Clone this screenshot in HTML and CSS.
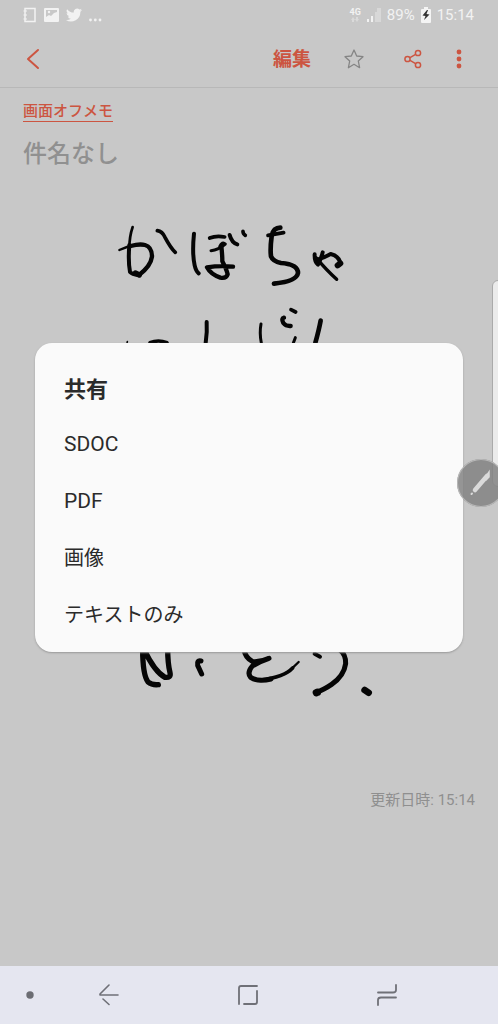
FILE: index.html
```html
<!DOCTYPE html>
<html lang="ja">
<head>
<meta charset="utf-8">
<meta name="viewport" content="width=device-width, initial-scale=1">
<title>画面オフメモ</title>
<link rel="stylesheet" href="styles.css">
</head>
<body>
<div class="screen">
  <div class="status">
    <div class="status-group">
      <svg width="14" height="16" viewBox="0 0 14 16" fill="none" stroke="#f2f2f2"><path d="M2 1.5H12V14.5H2Z" stroke-width="1.5"/><path d="M.5 4H4M.5 8H4M.5 12H4" stroke-width="1.2"/></svg>
      <svg width="15" height="16" viewBox="0 0 15 16"><path d="M1 1H14Q15 1 15 2V14Q15 15 14 15H1Q0 15 0 14V2Q0 1 1 1ZM2 3V10L5 8L7 9L10 6L13 5V3Z" fill="#f2f2f2" fill-rule="evenodd"/><circle cx="5" cy="5" r="1.2" fill="#f2f2f2"/></svg>
      <svg width="16" height="16" viewBox="0 0 24 24"><path d="M24 4.6a10 10 0 0 1-2.8.8 5 5 0 0 0 2.1-2.7 10 10 0 0 1-3.1 1.2 4.9 4.9 0 0 0-8.4 4.5A14 14 0 0 1 1.7 3.2a4.9 4.9 0 0 0 1.5 6.5 5 5 0 0 1-2.2-.6 4.9 4.9 0 0 0 3.9 4.9 5 5 0 0 1-2.2.1 4.9 4.9 0 0 0 4.6 3.4A10 10 0 0 1 0 19.5 14 14 0 0 0 21.5 7.1 10 10 0 0 0 24 4.6Z" fill="#f2f2f2"/></svg>
      <svg width="14" height="16" viewBox="0 0 14 16" fill="#f2f2f2"><circle cx="1.5" cy="13" r="1.4"/><circle cx="6.3" cy="13" r="1.4"/><circle cx="11" cy="13" r="1.4"/></svg>
    </div>
    <div class="status-group status-right">
      <div class="network"><span>4G</span><svg width="8" height="6" viewBox="0 0 8 6" fill="#dadada"><path d="M0 3L2 0L4 3H3V5H1V3ZM4 2H5V0H7V2H8L6 5Z"/></svg></div>
      <svg width="14" height="14" viewBox="0 0 14 14"><path d="M0 11H2V14H0ZM4 8H6V14H4Z" fill="#f2f2f2"/><path d="M8 4H10V14H8ZM10 0H14V14H10Z" fill="#d8d8d8"/></svg>
      <span>89%</span>
      <svg width="10" height="16" viewBox="0 0 10 16"><path d="M3 0H7V2H9Q10 2 10 3V15Q10 16 9 16H1Q0 16 0 15V3Q0 2 1 2H3Z" fill="#f4f4f4"/><path d="M6 3L1.5 8.5L4.5 9L3 13L8.5 7.5L5.5 7L7 3Z" fill="#333"/></svg>
      <span>15:14</span>
    </div>
  </div>
  <header class="toolbar">
    <button class="icon-button" aria-label="戻る"><svg width="14" height="22" viewBox="0 0 14 22" fill="none" stroke="#cc5541" stroke-width="2" stroke-linecap="round" stroke-linejoin="round"><path d="M12 2L2 11L12 20"/></svg></button>
    <button class="edit">編集</button>
    <button class="icon-button star" aria-label="お気に入り"><svg width="20" height="20" viewBox="0 0 20 20" fill="none" stroke="#858585" stroke-width="1.3" stroke-linejoin="round"><path d="M10 1L12.7 7L19 7.7L14.3 12L15.6 18.7L10 15.3L4.4 18.7L5.7 12L1 7.7L7.3 7Z"/></svg></button>
    <button class="icon-button share" aria-label="共有"><svg width="18" height="20" viewBox="0 0 18 20" fill="none" stroke="#cc5541" stroke-width="1.5"><circle cx="3.5" cy="10" r="2.6"/><circle cx="14" cy="4" r="2.6"/><circle cx="14" cy="16" r="2.6"/><path d="M6 8.6L11.6 5.4M6 11.4L11.6 14.6"/></svg></button>
    <button class="icon-button more" aria-label="その他"><svg width="6" height="20" viewBox="0 0 6 20" fill="#cc5541"><circle cx="3" cy="3" r="2.4"/><circle cx="3" cy="10" r="2.4"/><circle cx="3" cy="17" r="2.4"/></svg></button>
  </header>
  <main class="note">
    <a class="category" href="#">画面オフメモ</a>
    <h1 class="title">件名なし</h1>
    <svg class="ink" viewBox="0 215 498 500" role="img" aria-label="手書きメモ">
      <g transform="translate(110 215) scale(.3333)">
        <path d="M68 36Q58 65 58 100" stroke-width="8"/>
        <path d="M58 90Q54 140 60 171Q66 178 86 180" stroke-width="12"/>
        <path d="M28 105Q50 94 76 90" stroke-width="7"/>
        <path d="M62 93Q88 86 105 90Q126 96 126 125Q122 154 87 180" stroke-width="13"/>
        <path d="M76 174L88 180" stroke-width="16"/>
        <path d="M142 47Q157 49 165 67Q182 99 196 112" stroke-width="11"/>
        <path d="M252 56Q246 115 254 151Q258 169 266 175" stroke-width="12"/>
        <path d="M299 69Q319 61 344 66" stroke-width="11"/>
        <path d="M303 107Q325 105 346 87Q337 78 329 95" stroke-width="9"/>
        <path d="M334 94Q337 118 337 139Q350 164 353 178Q349 191 331 188Q302 178 291 157Q330 151 369 155" stroke-width="13"/>
        <path d="M359 60Q365 83 382 88" stroke-width="12"/>
        <path d="M399 49Q399 57 406 61" stroke-width="11"/>
        <path d="M290 321Q292 350 287 384" stroke-width="12"/>
        <path d="M120 383Q145 373 171 383" stroke-width="11"/>
        <path d="M52 380L51 385" stroke-width="5"/>
      </g>
      <g transform="translate(230 215) scale(.3333)">
        <path d="M114 61L161 53" stroke-width="11"/>
        <path d="M151 38Q130 38 125 63Q120 103 123 124Q129 139 153 144Q204 148 204 174Q200 199 132 206" stroke-width="14"/>
        <path d="M254 118Q253 141 264 149Q274 130 278 112M265 133Q286 126 302 117Q327 123 331 145" stroke-width="12"/>
        <path d="M331 145L323 151" stroke-width="18"/>
        <path d="M258 128Q290 166 320 193" stroke-width="10"/>
        <path d="M183 284L197 291" stroke-width="11"/>
        <path d="M162 308Q153 310 160 324Q168 334 182 333" stroke-width="13"/>
        <path d="M93 327Q88 354 94 384M196 368L190 384" stroke-width="9"/>
        <path d="M272 317Q267 344 256 384" stroke-width="14"/>
      </g>
      <g transform="translate(130 640) scale(.3333)">
        <path d="M38 28Q38 105 54 126Q66 136 85 134M43 30Q73 94 105 112Q124 114 120 98Q113 70 113 25" stroke-width="16"/>
        <path d="M213 63Q200 60 203 76L215 102" stroke-width="15"/>
        <path d="M342 28Q345 52 368 65Q392 67 417 55Q387 65 367 78Q350 98 362 112Q385 127 423 117" stroke-width="15"/>
        <path d="M390 121Q463 111 488 84" stroke-width="11"/>
        <path d="M480 91L506 66" stroke-width="7"/>
        <path d="M554 41L570 50" stroke-width="12"/>
        <path d="M629 29Q648 43 647 71Q642 108 605 133Q580 150 560 156" stroke-width="15"/>
        <path d="M562 157L559 158" stroke-width="22"/>
        <path d="M704 150L716 158" stroke-width="20"/>
      </g>
    </svg>
    <p class="updated">更新日時: 15:14</p>
  </main>
  <nav class="navbar">
    <button class="nav-dot" aria-label="ナビゲーションバーを隠す"><svg width="18" height="18" viewBox="0 0 18 18"><circle cx="9" cy="9" r="3.7" fill="#6c6d73"/></svg></button>
    <button aria-label="戻る"><svg width="20" height="22" viewBox="0 0 20 22" fill="none" stroke="#6f7077" stroke-width="1.6" stroke-linecap="round" stroke-linejoin="round"><path d="M10 1L1 10V11H19M4 15L10 20.5"/></svg></button>
    <button aria-label="ホーム"><svg width="22" height="22" viewBox="0 0 22 22" fill="none" stroke="#6f7077" stroke-width="1.8" stroke-linecap="round"><path d="M2 20V4Q2 2 4 2H20M20 7V18Q20 20 18 20H7"/></svg></button>
    <button aria-label="履歴"><svg width="20" height="22" viewBox="0 0 20 22" fill="none" stroke="#6f7077" stroke-width="1.8" stroke-linecap="round"><path d="M1 8.5H16Q19 8.5 19 6V1M1 21V16Q1 13.5 4 13.5H19"/></svg></button>
  </nav>
  <section class="dialog" role="dialog" aria-labelledby="share-title">
    <h2 id="share-title">共有</h2>
    <button class="latin">SDOC</button>
    <button class="latin">PDF</button>
    <button>画像</button>
    <button>テキストのみ</button>
  </section>
  <div class="edge-handle"></div>
  <button class="pen" aria-label="エアコマンド"><svg width="48" height="48" viewBox="0 0 48 48" fill="none" stroke="#dadada" stroke-linecap="round"><path d="M18 31L30 17" stroke-width="4.5"/><path d="M28 19L32 13V18L29 21Z" fill="#dadada" stroke-width="1.5"/><path d="M14.5 35L15 34.5" stroke-width="2"/></svg></button>
</div>
</body>
</html>
```
FILE: styles.css
```css
* {
  box-sizing: border-box;
}

body {
  margin: 0;
  font-family: Roboto, "Noto Sans CJK JP", sans-serif;
}

button {
  margin: 0;
  padding: 0;
  border: 0;
  background: none;
  font: inherit;
  color: inherit;
}

svg {
  display: block;
}

.screen {
  position: relative;
  display: flex;
  flex-direction: column;
  min-height: 100vh;
  overflow: hidden;
  background: #c8c8c8;
}

.status {
  display: flex;
  justify-content: space-between;
  align-items: center;
  height: 30px;
  padding: 0 24px 0 23px;
  color: #f2f2f2;
  font-size: 15px;
  line-height: 20px;
}

.status-group {
  display: flex;
  align-items: center;
  gap: 7px;
}

.status-right {
  gap: 6px;
}

.network {
  display: flex;
  flex-direction: column;
  align-items: center;
  font-size: 9px;
  font-weight: 700;
  line-height: 10px;
}

.toolbar {
  display: flex;
  align-items: center;
  height: 58px;
  padding: 0 36px 0 26px;
  border-bottom: 1px solid #b8b8b8;
}

.edit {
  margin-left: auto;
  padding-top: 2px;
  color: #cc5541;
  font-size: 19px;
  font-weight: 700;
  line-height: 28px;
}

.star {
  margin-left: 33px;
}

.share {
  margin-left: 40px;
}

.more {
  margin-left: 34px;
}

.note {
  display: flex;
  flex: 1;
  flex-direction: column;
  align-items: flex-start;
  padding-top: 13px;
}

.category {
  margin-left: 23px;
  border-bottom: 1px solid #cc5541;
  color: #cc5541;
  font-size: 15px;
  font-weight: 500;
  line-height: 20px;
  text-decoration: none;
}

.title {
  margin: 14px 23px 0;
  color: #909090;
  font-size: 24px;
  font-weight: 500;
  line-height: 36px;
}

.ink {
  width: 100%;
  margin-top: 43px;
  fill: none;
  stroke: #050505;
  stroke-linecap: round;
  stroke-linejoin: round;
}

.updated {
  align-self: flex-end;
  margin: 73px 23px 0 0;
  color: #8f8f8f;
  font-size: 15px;
  line-height: 24px;
}

.navbar {
  display: grid;
  grid-template-columns: 39px 1fr 1fr 1fr;
  height: 58px;
  padding-right: 41px;
  background: #e5e6f0;
}

.navbar button {
  display: flex;
  align-items: center;
  justify-content: center;
}

.navbar .nav-dot {
  justify-content: flex-end;
}

.dialog {
  position: absolute;
  top: 343px;
  right: 35px;
  left: 35px;
  display: flex;
  flex-direction: column;
  padding: 30px 29px 8px;
  border-radius: 17px;
  background: #fafafa;
  box-shadow: 0 1px 2px #999;
  color: #2b2b2b;
}

.dialog h2 {
  margin: 0 0 9px;
  font-size: 22px;
  font-weight: 700;
  line-height: 34px;
}

.dialog button {
  font-size: 20px;
  line-height: 57px;
  text-align: left;
}

.dialog .latin {
  font-size: 21px;
}

.edge-handle {
  position: absolute;
  top: 280px;
  right: -6px;
  width: 12px;
  height: 207px;
  border: 1px solid #aaa;
  border-radius: 6px;
  background: #ebebeb;
}

.pen {
  position: absolute;
  top: 459px;
  right: -7px;
  width: 48px;
  height: 48px;
  border-radius: 50%;
  background: rgba(130, 130, 130, 0.85);
  box-shadow: inset 0 0 0 1px #b8b8b8;
}
```
